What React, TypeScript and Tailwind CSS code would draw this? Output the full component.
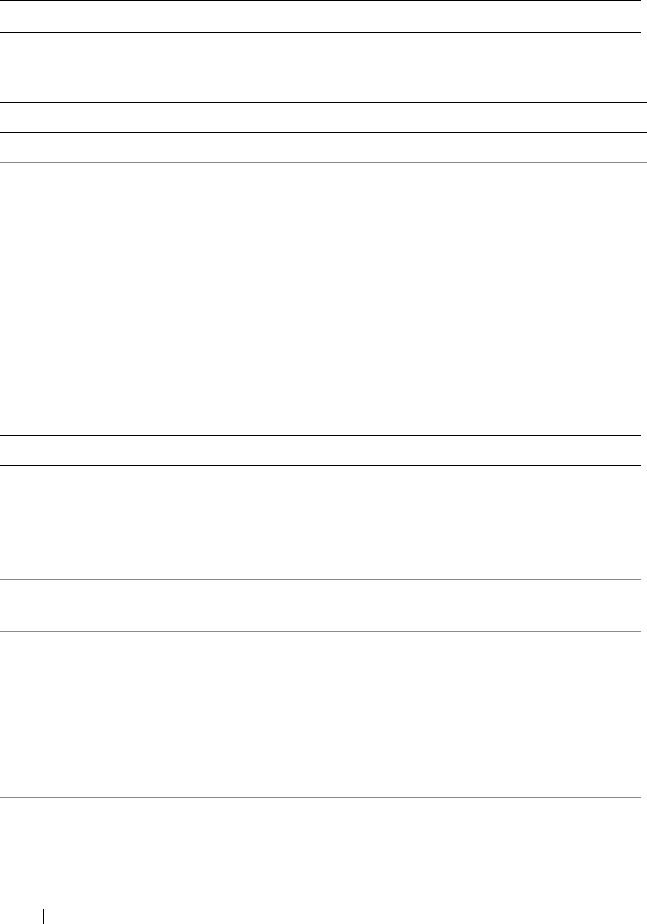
import React from "react";

export default function App() {
  return (
    <div className="w-[647px] h-[924px] bg-white flex flex-col overflow-hidden font-['Liberation_Sans',Arial,sans-serif]">
      <div className="w-[641px] h-[32px] border-t border-black" />
      <div className="w-[641px] h-[70px] border-t border-black" />
      <div className="w-[647px] h-[30px] border-t border-black" />
      <div className="w-[647px] h-[30px] border-t border-black" />
      <div className="w-[647px] h-[273px] border-t border-[#8a8a8a]" />
      <div className="w-[641px] h-[30px] border-t border-black" />
      <div className="w-[641px] h-[114px] border-t border-black" />
      <div className="w-[641px] h-[52px] border-t border-[#8a8a8a]" />
      <div className="w-[641px] h-[166px] border-t border-[#8a8a8a]" />
      <div className="w-[641px] h-[112px] border-t border-[#8a8a8a]" />
      <div className="ml-[43px] w-px h-[15px] bg-black" />
    </div>
  );
}
